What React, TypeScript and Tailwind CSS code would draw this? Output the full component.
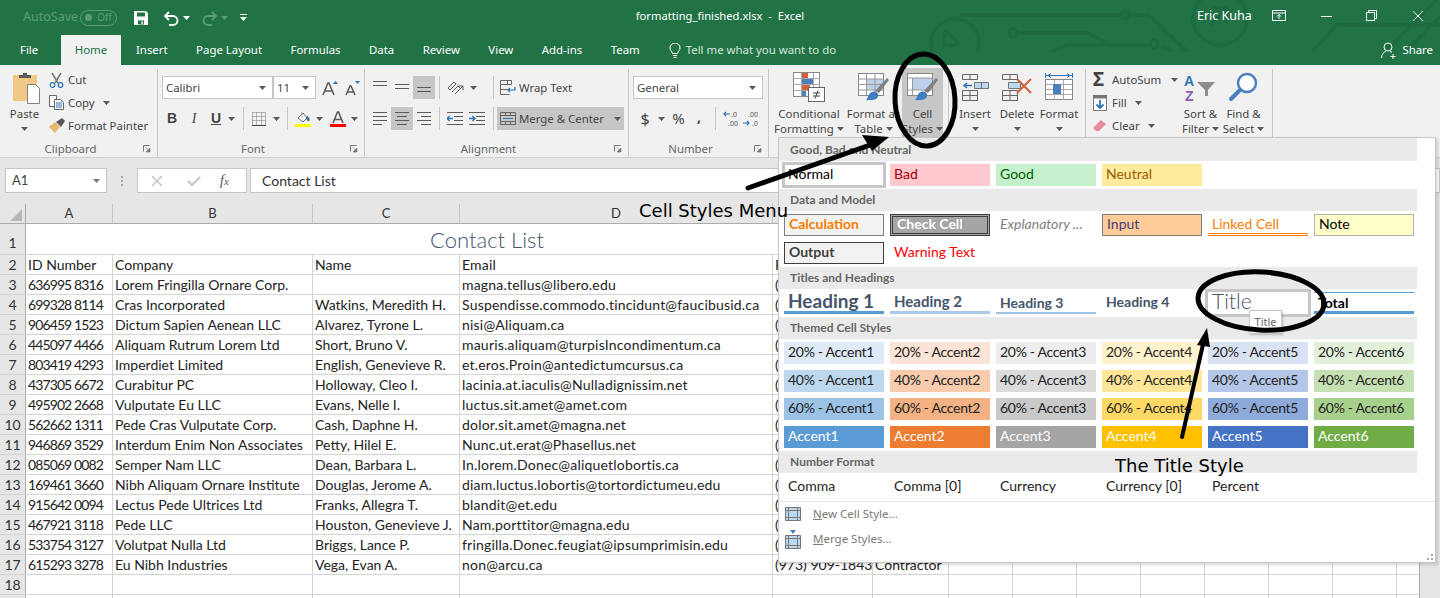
import React from "react";

const ui = "font-['Noto_Sans',sans-serif]";
const cal = "font-['Lato',sans-serif]";

const Caret = ({ c = "#595959", className = "" }: { c?: string; className?: string }) => (
  <svg width="7" height="4" viewBox="0 0 7 4" className={className}><path d="M0 0h7L3.500 4z" fill={c} /></svg>
);

const Launcher = () => (
  <svg width="16" height="10" viewBox="0 0 16 10" className="shrink-0">
    <path d="M2.500 7.500V1.500H8.500" fill="none" stroke="#777" />
    <path d="M5 3.500L8 6.500M9 4v4H5z" fill="#777" stroke="#777" strokeWidth="0.6" />
  </svg>
);

const Sep = ({ className = "" }: { className?: string }) => <div className={"w-px h-[23px] bg-[#c6c6c6] shrink-0 " + className} />;

function Lines({ rows }: { rows: [number, number][] }) {
  return (
    <svg width="16" height="16" viewBox="0 0 16 16">
      {rows.map(([x, w], i) => (
        <rect key={i} x={x} y={i * 4 + 1} width={w} height="1" fill="#595959" />
      ))}
    </svg>
  );
}

function TitleBar() {
  return (
    <div className="relative flex items-center h-[35px] text-white text-[12px] shrink-0">
      <div className="flex items-center pl-[23px] text-[#5b9a78] text-[12.500px]">
        <span className="w-[57px]">AutoSave</span>
        <div className="flex items-center justify-between w-[37px] h-[16px] rounded-full border border-[#5b9a78] px-[4px] text-[10px]">
          <span className="w-[7px] h-[7px] rounded-full bg-[#5b9a78]" />
          <span>Off</span>
        </div>
      </div>
      <svg width="16" height="16" viewBox="0 0 16 16" className="ml-[16px]">
        <path fillRule="evenodd" d="M1 1h12l2 2v12H1zM4 2.500v4h8v-4zM5 10.500v4h6v-4z" fill="#fff" />
        <rect x="8.500" y="11.500" width="1.500" height="2.500" fill="#fff" />
      </svg>
      <svg width="17" height="16" viewBox="0 0 17 16" className="ml-[14px]">
        <path d="M6 2L2 6l4 4M2 6h8a4.500 4.500 0 0 1 0 9H6" fill="none" stroke="#fff" strokeWidth="1.800" />
      </svg>
      <Caret c="#fff" className="ml-[3px]" />
      <svg width="17" height="16" viewBox="0 0 17 16" className="ml-[11px]">
        <path d="M11 2l4 4-4 4M15 6H7a4.500 4.500 0 0 0 0 9h4" fill="none" stroke="#5b9a78" strokeWidth="1.800" />
      </svg>
      <Caret c="#5b9a78" className="ml-[3px]" />
      <svg width="7" height="7" viewBox="0 0 7 7" className="ml-[12px]"><path d="M0 0h7v1H0zM0 3h7L3.500 7z" fill="#fff" /></svg>
      <div className="flex-1 flex justify-center pr-[4px] text-[11.200px] -translate-y-[1px]">
        <span>formatting_finished.xlsx&nbsp; -&nbsp; Excel</span>
      </div>
      <span className="text-[12.500px] w-[75px] -translate-y-[1px]">Eric Kuha</span>
      <svg width="14" height="12" viewBox="0 0 14 12" className="-translate-y-[2px]">
        <path d="M.5.500h13v10H.5zM.5 3h13M7 9V4.500M5 6.500l2-2 2 2" fill="none" stroke="#fff" />
      </svg>
      <svg width="12" height="12" viewBox="0 0 12 12" className="ml-[34px] -translate-y-[2px]"><path d="M1 6.500h11" stroke="#fff" /></svg>
      <svg width="11" height="11" viewBox="0 0 11 11" className="ml-[34px] -translate-y-[2px]">
        <path d="M.5 2.500h8v8h-8zM2.500 2.500v-2h8v8h-2" fill="none" stroke="#fff" />
      </svg>
      <svg width="12" height="12" viewBox="0 0 12 12" className="ml-[35px] mr-[16px] -translate-y-[2px]"><path d="M1 1l10 10M11 1L1 11" stroke="#fff" /></svg>
    </div>
  );
}

function Tabs() {
  const after = ["Insert", "Page Layout", "Formulas", "Data", "Review", "View", "Add-ins", "Team"];
  return (
    <div className="relative flex items-end h-[30px] text-white text-[11.400px] shrink-0">
      <span className="ml-[20px] w-[41px] h-[30px] leading-[30px]">File</span>
      <span className="w-[60px] h-[30px] leading-[30px] text-center bg-[#f1f1f1] text-[#217346]">Home</span>
      <div className="flex gap-[28.500px] ml-[15px]">
        {after.map((t) => <span key={t} className="h-[30px] leading-[30px]">{t}</span>)}
      </div>
      <svg width="12" height="15" viewBox="0 0 12 15" className="ml-[29px] mb-[7px]">
        <path d="M3.500 10.500C3 8 1 7.500 1 5a5 5 0 0 1 10 0c0 2.500-2 3-2.500 5.500zM4 12.500h4M4.500 14.500h3" fill="none" stroke="#fff" />
      </svg>
      <span className="ml-[5px] h-[30px] leading-[30px] text-[#d5e5dc]">Tell me what you want to do</span>
      <div className="ml-auto flex items-center h-[30px] pr-[7px]">
        <svg width="16" height="17" viewBox="0 0 16 17" className="mr-[5px]">
          <circle cx="7" cy="5" r="4" fill="none" stroke="#fff" />
          <path d="M.5 16c0-4 2.500-6 4.500-6.500M9 9.500c.8.200 1.500.500 2 1M12 12v5M9.500 14.500h5" fill="none" stroke="#fff" />
        </svg>
        <span>Share</span>
      </div>
    </div>
  );
}

function Circuit() {
  return (
    <svg width="1440" height="52" viewBox="0 0 1440 52" className="absolute left-0 top-0 pointer-events-none">
      <g fill="none" stroke="#1e6b41" strokeWidth="3.500">
        <circle cx="955" cy="43" r="24" />
        <path d="M945 30l15 15M945 32v13h13" />
        <path d="M960 15h160M1131 15h17l40 37" />
        <circle cx="1125.500" cy="15" r="4" />
        <circle cx="1013" cy="33" r="4" />
        <path d="M1018 33h70l22 12M1050 52l18-7h83M1161 46l14 6" />
        <circle cx="1154" cy="44" r="4" />
        <circle cx="1220" cy="18" r="27" />
        <path d="M1212 8h15v15M1225 10l-15 15" />
        <path d="M1312 52l25-27h103M1385 52l52-52M1405 52l35-35" />
      </g>
    </svg>
  );
}

function Group({ w, label, children, sep = true }: { w: string; label?: string; children: React.ReactNode; sep?: boolean }) {
  return (
    <div className={"flex flex-col h-[88px] mt-[4px] " + w + (sep ? " border-r border-[#c6c6c6]" : "")}>
      <div className="h-[71px] shrink-0">{children}</div>
      {label && (
        <div className="flex items-center h-[17px] text-[#666] text-[11.400px]">
          <span className="flex-1 text-center">{label}</span>
          <Launcher />
        </div>
      )}
    </div>
  );
}

const SmallRow = ({ icon, text, caret }: { icon: React.ReactNode; text: string; caret?: boolean }) => (
  <div className="flex items-center h-[23px]">
    <span className="w-[18px] h-[16px] flex items-center shrink-0">{icon}</span>
    <span className="ml-[1px]">{text}</span>
    {caret && <Caret className="ml-[8px]" />}
  </div>
);

function Clipboard() {
  return (
    <Group w="w-[158px]" label="Clipboard">
      <div className="flex text-[#444] text-[11.400px]">
        <div className="w-[49px] flex flex-col items-center">
          <svg width="30" height="33" viewBox="0 0 30 33" className="mt-[3px] ml-[3px]">
            <rect x="2" y="3" width="24" height="26" fill="#f0c987" />
            <path d="M8 6V3h4V1h4v2h4v3z" fill="#595959" />
            <path d="M16.500 12.500h8l4 4v15h-12z" fill="#fff" stroke="#7f7f7f" />
          </svg>
          <span className="mt-[1px] leading-[16px]">Paste</span>
          <Caret className="mt-[5px]" />
        </div>
        <div className="-mt-[1px]">
          <SmallRow text="Cut" icon={
            <svg width="15" height="16" viewBox="0 0 15 16">
              <path d="M3 1l6 10M12 1L6 11" stroke="#777" strokeWidth="1.500" fill="none" />
              <circle cx="3.500" cy="13" r="2.300" fill="none" stroke="#2e75b6" strokeWidth="1.200" />
              <circle cx="11.500" cy="13" r="2.300" fill="none" stroke="#2e75b6" strokeWidth="1.200" />
            </svg>} />
          <SmallRow text="Copy" caret icon={
            <svg width="15" height="15" viewBox="0 0 15 15">
              <path d="M.5.500h7v11h-7z" fill="#fff" stroke="#666" />
              <path d="M5.500 4.500h6l3 3v7h-9z" fill="#fff" stroke="#666" />
              <path d="M7 8h6M7 10h6M7 12h6" stroke="#2e75b6" />
            </svg>} />
          <SmallRow text="Format Painter" icon={
            <svg width="16" height="15" viewBox="0 0 16 15">
              <path d="M0 9l6-5 5 5-5 6z" fill="#e9b96e" />
              <path d="M7 4l6-4 3 3-4 6z" fill="#595959" />
            </svg>} />
        </div>
      </div>
    </Group>
  );
}

const Sel = ({ w, text, cls = "" }: { w: string; text: string; cls?: string }) => (
  <div className={"flex items-center justify-between bg-white border border-[#c6c6c6] h-[23px] pl-[3px] pr-[6px] text-[11.400px] text-[#444] shrink-0 " + w + " " + cls}>
    <span>{text}</span>
    <Caret />
  </div>
);

function Font() {
  return (
    <Group w="w-[207px]" label="Font">
      <div className="pl-[4px] pt-[7px] text-[#444]">
        <div className="flex items-center">
          <Sel w="w-[111px]" text="Calibri" />
          <Sel w="w-[43px]" text="11" />
          <svg width="18" height="16" viewBox="0 0 18 16" className="ml-[6px]">
            <path d="M1 15L6 3h1l5 12M3 11h7" fill="none" stroke="#595959" strokeWidth="1.500" />
            <path d="M11 4l2.500-3L16 4z" fill="#2e75b6" />
          </svg>
          <svg width="16" height="16" viewBox="0 0 16 16" className="ml-[5px]">
            <path d="M1 15l4-9h1l4 9M3 12h5" fill="none" stroke="#595959" strokeWidth="1.500" />
            <path d="M10 1h5l-2.500 3z" fill="#2e75b6" />
          </svg>
        </div>
        <div className="flex items-center mt-[8px] h-[23px]">
          <span className="w-[22px] ml-[-1px] text-center font-bold text-[14px] font-['Liberation_Sans',sans-serif]">B</span>
          <span className="w-[22px] text-center italic text-[14px] font-['Liberation_Serif',serif]">I</span>
          <span className="w-[22px] text-center underline font-bold text-[14px] font-['Liberation_Sans',sans-serif]">U</span>
          <Caret className="ml-[1px]" />
          <Sep className="ml-[8px] mr-[8px]" />
          <svg width="14" height="14" viewBox="0 0 14 14">
            <path d="M.5.500h13v13M.5 4.500h13M.5 8.500h13M4.500.500v13M9.500.500v13M.5.500v13" fill="none" stroke="#777" strokeDasharray="1 1" />
            <path d="M0 13.500h14" stroke="#444" />
          </svg>
          <Caret className="ml-[7px]" />
          <Sep className="ml-[7px] mr-[7px]" />
          <div className="flex flex-col items-center w-[16px]">
            <svg width="16" height="13" viewBox="0 0 16 13">
              <path d="M3 7l5-5 4 5-4 4z" fill="#fff" stroke="#666" />
              <path d="M7 1v6M12 5c2 1 3 3 2 5-2 0-3-2-2-5z" fill="#2e75b6" stroke="#666" strokeWidth=".5" />
            </svg>
            <div className="w-[16px] h-[3px] bg-[#ffff00]" />
          </div>
          <Caret className="ml-[5px]" />
          <div className="flex flex-col items-center w-[16px] ml-[7px]">
            <svg width="14" height="13" viewBox="0 0 14 13"><path d="M2 12L6.500 1h1L12 12M4 8.500h6" fill="none" stroke="#595959" strokeWidth="1.600" /></svg>
            <div className="w-[16px] h-[3px] bg-[#ff0000]" />
          </div>
          <Caret className="ml-[5px]" />
        </div>
      </div>
    </Group>
  );
}

const IconBtn = ({ on, children }: { on?: boolean; children: React.ReactNode }) => (
  <div className={"flex items-center justify-center w-[22px] h-[23px] shrink-0 " + (on ? "bg-[#c6c6c6]" : "")}>{children}</div>
);

function IndentIcon({ flip }: { flip?: boolean }) {
  return (
    <svg width="16" height="13" viewBox="0 0 16 13">
      <path d="M0 .5h16M7 4.500h9M7 8.500h9M0 12.500h16" stroke="#595959" />
      <path d={flip ? "M0 6.500h6M3.500 4l2.500 2.500L3.500 9" : "M6 6.500H0M2.500 4L0 6.500 2.500 9"} fill="none" stroke="#2e75b6" strokeWidth="1.500" />
    </svg>
  );
}

function Alignment() {
  return (
    <Group w="w-[264px]" label="Alignment">
      <div className="pl-[4px] pt-[7px] text-[#444] text-[11.400px]">
        <div className="flex items-center">
          <IconBtn><Lines rows={[[1, 14], [1, 14], [0, 0]]} /></IconBtn>
          <IconBtn><div className="translate-y-[3px]"><Lines rows={[[1, 14], [1, 14], [0, 0]]} /></div></IconBtn>
          <IconBtn on><div className="translate-y-[6px]"><Lines rows={[[1, 14], [1, 14], [0, 0]]} /></div></IconBtn>
          <Sep className="ml-[4px] mr-[7px]" />
          <svg width="18" height="16" viewBox="0 0 18 16">
            <path d="M1 8l6-6 2 2-6 6zM5 12l6-6 2 2" fill="none" stroke="#595959" />
            <path d="M8 14l8-8M16 6v4M16 6h-4" fill="none" stroke="#595959" />
          </svg>
          <Caret className="ml-[5px]" />
          <Sep className="ml-[16px] mr-[6px]" />
          <svg width="16" height="15" viewBox="0 0 16 15">
            <path d="M.5.500h11v4H.5zM.5 4.500v10h9M.5 9.500h9M7.500.500v4" fill="none" stroke="#666" />
            <path d="M15 7v3H8M10 8l-2 2 2 2" fill="none" stroke="#2e75b6" strokeWidth="1.200" />
          </svg>
          <span className="ml-[3px]">Wrap Text</span>
        </div>
        <div className="flex items-center mt-[8px]">
          <IconBtn><Lines rows={[[1, 14], [1, 14], [1, 14], [1, 9]]} /></IconBtn>
          <IconBtn on><Lines rows={[[1, 14], [3, 10], [1, 14], [3, 10]]} /></IconBtn>
          <IconBtn><Lines rows={[[1, 14], [5, 10], [1, 14], [5, 10]]} /></IconBtn>
          <Sep className="ml-[4px]" />
          <div className="w-[4px]" />
          <IconBtn><IndentIcon /></IconBtn>
          <IconBtn><IndentIcon flip /></IconBtn>
          <Sep className="ml-[5px] mr-[3px]" />
          <div className="flex items-center w-[127px] h-[23px] bg-[#c6c6c6] pl-[3px] shrink-0">
            <svg width="16" height="13" viewBox="0 0 16 13">
              <path d="M.5.500h15v12H.5zM.5 3.500h15M.5 9.500h15M5.500.5v3M10.500.5v3M5.500 9.500v3M10.500 9.500v3" fill="none" stroke="#666" />
              <path d="M3 6.500h10" stroke="#2e75b6" />
            </svg>
            <span className="ml-[3px]">Merge &amp; Center</span>
            <Caret className="ml-[10px]" />
          </div>
        </div>
      </div>
    </Group>
  );
}

const DecIcon = ({ a, b, left }: { a: string; b: string; left?: boolean }) => (
  <svg width="19" height="18" viewBox="0 0 19 18">
    <path d={left ? "M7 4H1M3 2L1 4l2 2" : "M0 13h6M4 11l2 2-2 2"} fill="none" stroke="#2e75b6" strokeWidth="1.200" />
    <text x={left ? 8 : 5} y="7" fontSize="7" fill="#595959" fontFamily="Noto Sans">{a}</text>
    <text x={left ? 5 : 9} y="16" fontSize="7" fill="#595959" fontFamily="Noto Sans">{b}</text>
  </svg>
);

function NumberGroup() {
  return (
    <Group w="w-[140px]" label="Number">
      <div className="pl-[4px] pt-[7px] text-[#444]">
        <Sel w="w-[130px]" text="General" />
        <div className="flex items-center mt-[8px] h-[23px]">
          <span className="ml-[5px] text-[16px] w-[14px] text-center">$</span>
          <Caret className="ml-[6px]" />
          <span className="ml-[6px] text-[15px] w-[15px] text-center">%</span>
          <span className="ml-[8px] text-[14px] font-bold w-[10px] text-center -translate-y-[2px]">,</span>
          <Sep className="ml-[11px] mr-[7px]" />
          <DecIcon a=".0" b=".00" left />
          <div className="w-[1px]" />
          <DecIcon a=".00" b=".0" />
        </div>
      </div>
    </Group>
  );
}

function Tall({ w, icon, lines, caret = true, on, blank }: { w: string; icon: React.ReactNode; lines: string[]; caret?: boolean; on?: boolean; blank?: boolean }) {
  return (
    <div className={"flex flex-col items-center h-[69px] text-[11.400px] text-[#444] leading-[15px] shrink-0 " + w + (on ? " bg-[#c6c6c6]" : "")}>
      <div className="h-[38px] flex items-center justify-center shrink-0">{icon}</div>
      <span className="whitespace-nowrap">{lines[0]}</span>
      <div className="flex items-center whitespace-nowrap h-[15px]">
        {lines[1] && <span>{lines[1]}</span>}
        {caret && <Caret className={blank ? "" : "ml-[3px]"} />}
      </div>
    </div>
  );
}

const Brush = () => (
  <g>
    <path d="M8 27c2-1 2-7 6-8 3-1 5 0 6 2 1 3-2 6-6 6-2 0-4 .5-6 0z" fill="#3f7fbf" />
    <path d="M17 18L29 5l2 2-10 13z" fill="#7f7f7f" />
  </g>
);

function Styles() {
  return (
    <Group w="w-[180px]">
      <div className="flex pl-[4px] -mt-[1px]">
        <Tall w="w-[72px]" lines={["Conditional", "Formatting"]} icon={
          <svg width="32" height="30" viewBox="0 0 32 30">
            <rect x=".5" y=".5" width="26" height="24" fill="#fff" stroke="#888" />
            <rect x="9" y="1" width="6" height="5" fill="#d2603a" />
            <rect x="9" y="7" width="12" height="5" fill="#4a80bd" />
            <rect x="9" y="13" width="8" height="5" fill="#d2603a" />
            <rect x="9" y="19" width="4" height="5" fill="#4a80bd" />
            <path d="M8.500 1v24M20.500 1v24M1 6.500h26M1 12.500h26M1 18.500h26" stroke="#aaa" />
            <rect x="15.500" y="15.500" width="16" height="14" fill="#fff" stroke="#666" />
            <path d="M20 21h7M20 24h7M25 18.500l-3 8" stroke="#444" fill="none" />
          </svg>} />
        <Tall w="w-[57px]" lines={["Format as", "Table"]} icon={
          <svg width="32" height="28" viewBox="0 0 32 28">
            <rect x=".5" y=".5" width="25" height="22" fill="#fff" stroke="#888" />
            <rect x="8" y="6" width="17" height="11" fill="#bdd2ea" />
            <path d="M.5 6h25M.5 11.500h25M.5 17h25M8.500 .5v22M17 .5v22" stroke="#999" />
            <Brush />
          </svg>} />
        <Tall w="w-[41px]" on lines={["Cell", "Styles"]} icon={
          <svg width="32" height="28" viewBox="0 0 32 28">
            <rect x=".5" y=".5" width="25" height="22" fill="#fff" stroke="#888" />
            <rect x="6" y="5" width="19" height="12" fill="#bdd2ea" />
            <path d="M.5 5h25M.5 17h25M5.500 5v18" stroke="#999" />
            <Brush />
          </svg>} />
      </div>
    </Group>
  );
}

function Cells() {
  const grid2 = <path d="M.5 16.500h15v10H.5zM.5 21.500h15M8 16.500v10M.5.500h15v5H.5zM8 .5v5" fill="none" stroke="#666" />;
  return (
    <Group w="w-[137px]">
      <div className="flex pl-[5px] -mt-[1px]">
        <Tall w="w-[42px]" blank lines={["Insert", ""]} icon={
          <svg width="27" height="27" viewBox="0 0 27 27">
            {grid2}
            <path d="M12.500 8.500h14v6h-14zM19.500 8.500v6" fill="#bdd7ee" stroke="#777" />
            <path d="M10 11.500H2M5 9l-3 2.500L5 14" fill="none" stroke="#2e75b6" strokeWidth="1.500" />
          </svg>} />
        <Tall w="w-[42px]" blank lines={["Delete", ""]} icon={
          <svg width="30" height="27" viewBox="0 0 30 27">
            {grid2}
            <path d="M6.500 8.500h12v6h-12z" fill="#bdd7ee" stroke="#777" />
            <path d="M15 5l14 14M29 5L15 19" stroke="#d2603a" strokeWidth="2" />
          </svg>} />
        <Tall w="w-[42px]" blank lines={["Format", ""]} icon={
          <svg width="28" height="29" viewBox="0 0 28 29">
            <path d="M.5 2.500h27M.5 0v5M27.500 0v5M6 .5L3 2.500l3 2M22 .5l3 2-3 2" fill="none" stroke="#2e75b6" />
            <rect x=".5" y="6.500" width="27" height="20" fill="#fff" stroke="#888" />
            <path d="M9.500 7v20M18.500 7v20M1 11.500h26M1 16.500h26M1 21.500h26" stroke="#aaa" />
            <rect x="8" y="11" width="8" height="10" fill="#4a80bd" />
          </svg>} />
      </div>
    </Group>
  );
}

function Editing() {
  return (
    <Group w="w-[187px]">
      <div className="flex pl-[7px] text-[11.400px] text-[#444]">
        <div className="w-[86px] -mt-[1px] shrink-0">
          <div className="flex items-center h-[23px]">
            <span className="w-[19px] text-[#444] text-[19px] font-bold leading-none">Σ</span>
            <span>AutoSum</span>
            <Caret className="ml-[10px]" />
          </div>
          <SmallRow text="Fill" caret icon={
            <svg width="15" height="16" viewBox="0 0 15 16">
              <rect x=".5" y=".5" width="13" height="15" fill="#fff" stroke="#777" />
              <rect x=".5" y=".5" width="13" height="3" fill="#777" />
              <path d="M7 5v8M3.500 9.500L7 13l3.500-3.500" fill="none" stroke="#2e75b6" strokeWidth="1.800" />
            </svg>} />
          <SmallRow text="Clear" caret icon={
            <svg width="14" height="13" viewBox="0 0 14 13"><path d="M0 9l8-8 5 4-7 7H3z" fill="#e98b9a" /></svg>} />
        </div>
        <div className="-mt-[1px] flex">
          <Tall w="w-[43px]" lines={["Sort &", "Filter"]} icon={
            <svg width="34" height="29" viewBox="0 0 34 29">
              <text x="0" y="13" fontSize="14" fontWeight="bold" fill="#2e75b6" fontFamily="Liberation Sans">A</text>
              <text x="1" y="28" fontSize="14" fontWeight="bold" fill="#8e5ab5" fontFamily="Liberation Sans">Z</text>
              <path d="M13 9h18l-7 8v6h-3v-6z" fill="#8c8c8c" />
            </svg>} />
          <Tall w="w-[43px]" lines={["Find &", "Select"]} icon={
            <svg width="30" height="30" viewBox="0 0 30 30">
              <circle cx="18" cy="11" r="9" fill="#fff" stroke="#4a80bd" strokeWidth="2.500" />
              <path d="M11 18L2 27" stroke="#4a80bd" strokeWidth="4" strokeLinecap="round" />
            </svg>} />
        </div>
      </div>
    </Group>
  );
}

function Ribbon() {
  return (
    <div className={"flex h-[93px] bg-[#f1f1f1] border-b border-[#d0d0d0] shrink-0 " + ui}>
      <Clipboard />
      <Font />
      <Alignment />
      <NumberGroup />
      <Styles />
      <Cells />
      <Editing />
    </div>
  );
}

function FormulaBar() {
  return (
    <div className={"flex items-start h-[46px] bg-[#e6e6e6] pt-[10px] pl-[5px] shrink-0 text-[13px] text-[#444] " + cal}>
      <div className="flex items-center justify-between w-[102px] h-[25px] bg-white border border-[#c6c6c6] pl-[6px] pr-[6px]">
        <span>A1</span>
        <Caret c="#777" />
      </div>
      <div className="w-[30px] h-[25px] flex flex-col items-center justify-center gap-[2px]">
        <span className="w-[2px] h-[2px] bg-[#aaa]" /><span className="w-[2px] h-[2px] bg-[#aaa]" /><span className="w-[2px] h-[2px] bg-[#aaa]" />
      </div>
      <div className="flex items-center w-[110px] h-[25px] bg-white border border-[#c6c6c6] pl-[13px]">
        <svg width="12" height="12" viewBox="0 0 12 12"><path d="M1 1l10 10M11 1L1 11" stroke="#c6c6c6" strokeWidth="1.500" /></svg>
        <svg width="14" height="12" viewBox="0 0 14 12" className="ml-[24px]"><path d="M1 6l4 4 8-8" fill="none" stroke="#c6c6c6" strokeWidth="2" /></svg>
        <span className="ml-[19px] italic font-['Liberation_Serif',serif] text-[14px] text-[#555]">f<span className="text-[11px]">x</span></span>
      </div>
      <div className="flex-1 h-[25px] bg-white border border-[#c6c6c6] ml-[3px] pl-[11px] flex items-center text-[14px] text-[#333]">Contact List</div>
    </div>
  );
}

const rows: string[][] = [
  ["ID Number", "Company", "Name", "Email", "P"],
  ["636995 8316", "Lorem Fringilla Ornare Corp.", "", "magna.tellus@libero.edu", "("],
  ["699328 8114", "Cras Incorporated", "Watkins, Meredith H.", "Suspendisse.commodo.tincidunt@faucibusid.ca", "("],
  ["906459 1523", "Dictum Sapien Aenean LLC", "Alvarez, Tyrone L.", "nisi@Aliquam.ca", "("],
  ["445097 4466", "Aliquam Rutrum Lorem Ltd", "Short, Bruno V.", "mauris.aliquam@turpisIncondimentum.ca", "("],
  ["803419 4293", "Imperdiet Limited", "English, Genevieve R.", "et.eros.Proin@antedictumcursus.ca", "("],
  ["437305 6672", "Curabitur PC", "Holloway, Cleo I.", "lacinia.at.iaculis@Nulladignissim.net", "("],
  ["495902 2668", "Vulputate Eu LLC", "Evans, Nelle I.", "luctus.sit.amet@amet.com", "("],
  ["562662 1311", "Pede Cras Vulputate Corp.", "Cash, Daphne H.", "dolor.sit.amet@magna.net", "("],
  ["946869 3529", "Interdum Enim Non Associates", "Petty, Hilel E.", "Nunc.ut.erat@Phasellus.net", "("],
  ["085069 0082", "Semper Nam LLC", "Dean, Barbara L.", "In.lorem.Donec@aliquetlobortis.ca", "("],
  ["169461 3660", "Nibh Aliquam Ornare Institute", "Douglas, Jerome A.", "diam.luctus.lobortis@tortordictumeu.edu", "("],
  ["915642 0094", "Lectus Pede Ultrices Ltd", "Franks, Allegra T.", "blandit@et.edu", "("],
  ["467921 3118", "Pede LLC", "Houston, Genevieve J.", "Nam.porttitor@magna.edu", "("],
  ["533754 3127", "Volutpat Nulla Ltd", "Briggs, Lance P.", "fringilla.Donec.feugiat@ipsumprimisin.edu", "("],
  ["615293 3278", "Eu Nibh Industries", "Vega, Evan A.", "non@arcu.ca", "(973) 909-1843", "Contractor"],
  [],
  [],
];

const colW = ["w-[87px]", "w-[200px]", "w-[147px]", "w-[313px]", "w-[100px]", "w-[76px]", "w-[64px]", "w-[64px]", "w-[64px]", "w-[64px]", "w-[64px]", "w-[64px]", "w-[64px]"];
const heads = ["A", "B", "C", "D", "E", "F", "G", "H", "I", "J", "K", "L", "M"];

function Sheet() {
  return (
    <div className={"flex flex-1 min-h-0 " + cal}>
      <div className="w-[1419px] shrink-0 bg-white text-[14px] text-[#222]">
        <div className="flex h-[20px] bg-[#e6e6e6] border-b border-[#ababab] text-[#333] text-[13px]">
          <div className="relative w-[26px] h-[19px] border-r border-[#ababab] shrink-0">
            <svg width="12" height="12" viewBox="0 0 12 12" className="absolute right-[3px] bottom-[2px]"><path d="M12 0v12H0z" fill="#b8b8b8" /></svg>
          </div>
          {heads.map((h, i) => (
            <div key={h} className={"text-center leading-[19px] border-r border-[#c6c6c6] shrink-0 " + colW[i]}>{i < 5 ? h : ""}</div>
          ))}
        </div>
        <div className="flex h-[31px] border-b border-[#d4d4d4]">
          <div className="w-[26px] bg-[#e6e6e6] border-r border-[#ababab] shrink-0 text-center text-[#333] pt-[9px] leading-[20px]">1</div>
          <div className="w-[923px] text-center text-[#44546a] text-[22px] font-light leading-[32px] border-r border-[#d4d4d4] shrink-0">Contact List</div>
        </div>
        {rows.map((r, i) => (
          <div key={i} className="flex h-[20px] border-b border-[#d4d4d4]">
            <div className="w-[26px] bg-[#e6e6e6] border-r border-[#ababab] shrink-0 text-center text-[#333] leading-[19px]">{i + 2}</div>
            {colW.map((w, j) => {
              const tone = j === 0 && i > 0 ? "tracking-[-0.9px]" : j === 3 ? "tracking-[0.2px]" : "";
              return (
                <div key={j} className={"pl-[2px] leading-[19px] whitespace-nowrap border-r border-[#d4d4d4] shrink-0 overflow-hidden " + w + " " + tone}>{r[j] ?? ""}</div>
              );
            })}
          </div>
        ))}
      </div>
      <div className="flex-1 bg-[#e6e6e6] border-l border-[#ababab]" />
    </div>
  );
}

const Head = ({ t, first }: { t: string; first?: boolean }) => (
  <div className={"mr-[18px] bg-[#eaeaea] pl-[11px] text-[#666] font-bold text-[12px] flex items-center " + (first ? "h-[23px]" : "h-[22px]")}>{t}</div>
);

type C = { t: string; c?: string };
const Cell = ({ t, c = "" }: C) => (
  <div className={"h-[22px] pl-[4px] flex items-center text-[14px] whitespace-nowrap overflow-hidden " + (c.includes("border-b") ? "" : "pb-[4px] ") + c}>{t}</div>
);

const GRow = ({ items }: { items: C[] }) => (
  <div className="grid grid-cols-[repeat(6,100px)] gap-x-[6px] gap-y-[6px] pl-[5px] py-[3px]">
    {items.map((it, i) => <Cell key={i} {...it} />)}
  </div>
);

const num = "tracking-[-0.3px] text-[#222] ";
const themed: C[] = [
  { t: "20% - Accent1", c: num + "bg-[#deeaf6]" },
  { t: "20% - Accent2", c: num + "bg-[#fbe4d5]" },
  { t: "20% - Accent3", c: num + "bg-[#ededed]" },
  { t: "20% - Accent4", c: num + "bg-[#fff2cc]" },
  { t: "20% - Accent5", c: num + "bg-[#d9e2f3]" },
  { t: "20% - Accent6", c: num + "bg-[#e2efd9]" },
  { t: "40% - Accent1", c: num + "bg-[#bdd7ee]" },
  { t: "40% - Accent2", c: num + "bg-[#f8cbad]" },
  { t: "40% - Accent3", c: num + "bg-[#dbdbdb]" },
  { t: "40% - Accent4", c: num + "bg-[#ffe699]" },
  { t: "40% - Accent5", c: num + "bg-[#b4c6e7]" },
  { t: "40% - Accent6", c: num + "bg-[#c5e0b3]" },
  { t: "60% - Accent1", c: num + "bg-[#9cc2e5]" },
  { t: "60% - Accent2", c: num + "bg-[#f4b183]" },
  { t: "60% - Accent3", c: num + "bg-[#c9c9c9]" },
  { t: "60% - Accent4", c: num + "bg-[#ffd966]" },
  { t: "60% - Accent5", c: num + "bg-[#8eaadb]" },
  { t: "60% - Accent6", c: num + "bg-[#a8d08d]" },
  { t: "Accent1", c: "bg-[#5b9bd5] text-white" },
  { t: "Accent2", c: "bg-[#ed7d31] text-white" },
  { t: "Accent3", c: "bg-[#a5a5a5] text-white" },
  { t: "Accent4", c: "bg-[#ffc000] text-white" },
  { t: "Accent5", c: "bg-[#4472c4] text-white" },
  { t: "Accent6", c: "bg-[#70ad47] text-white" },
];

function Gallery() {
  return (
    <div className={"absolute left-[778px] top-[137px] w-[658px] h-[426px] bg-white border border-[#c6c6c6] shadow-[2px_2px_3px_rgba(0,0,0,0.15)] " + cal}>
      <Head first t="Good, Bad and Neutral" />
      <GRow items={[
        { t: "Normal", c: "bg-white text-black outline-[3px] outline-solid outline-[#c6c6c6] outline-offset-[-1px]" },
        { t: "Bad", c: "bg-[#ffc7ce] text-[#9c0006]" },
        { t: "Good", c: "bg-[#c6efce] text-[#006100]" },
        { t: "Neutral", c: "bg-[#ffeb9c] text-[#9c5700]" },
      ]} />
      <Head t="Data and Model" />
      <GRow items={[
        { t: "Calculation", c: "bg-[#f2f2f2] border border-[#7f7f7f] text-[#fa7d00] font-bold pl-[3px]" },
        { t: "Check Cell", c: "bg-[#a5a5a5] border-[3px] border-double border-[#3f3f3f] text-white font-bold pl-[2px]" },
        { t: "Explanatory ...", c: "italic text-[#7f7f7f]" },
        { t: "Input", c: "bg-[#ffcc99] border border-[#7f7f7f] text-[#3f3f76] pl-[3px]" },
        { t: "Linked Cell", c: "text-[#fa7d00] border-b-[3px] border-double border-[#ff8001]" },
        { t: "Note", c: "bg-[#ffffcc] border border-[#b2b2b2] text-black pl-[3px]" },
        { t: "Output", c: "bg-[#f2f2f2] border border-[#3f3f3f] text-[#3f3f3f] font-bold pl-[3px]" },
        { t: "Warning Text", c: "text-[#ff0000]" },
      ]} />
      <Head t="Titles and Headings" />
      <GRow items={[
        { t: "Heading 1", c: "text-[#44546a] font-bold text-[19px] pl-[2px] border-b-[3px] border-[#5b9bd5]" },
        { t: "Heading 2", c: "text-[#44546a] font-bold text-[15px] border-b-[3px] border-[#a9c9e7]" },
        { t: "Heading 3", c: "text-[#44546a] font-bold text-[13px] border-b-[2px] border-[#9cc2e5]" },
        { t: "Heading 4", c: "text-[#44546a] font-bold text-[13px] border-b-[3px] border-transparent" },
        { t: "Title", c: "text-[#44546a] font-light text-[21px] bg-white outline-[3px] outline-solid outline-[#c6c6c6]" },
        { t: "Total", c: "text-black font-bold border-t border-b-[3px] border-b-double border-t-[#5b9bd5] border-b-[#5b9bd5]" },
      ]} />
      <Head t="Themed Cell Styles" />
      <GRow items={themed} />
      <Head t="Number Format" />
      <GRow items={[
        { t: "Comma", c: "text-[#222]" },
        { t: "Comma [0]", c: "text-[#222]" },
        { t: "Currency", c: "text-[#222]" },
        { t: "Currency [0]", c: "text-[#222]" },
        { t: "Percent", c: "text-[#222]" },
      ]} />
      <div className="h-px bg-[#e1e1e1]" />
      <div className={"flex flex-col gap-[5px] pl-[6px] text-[#7a7a7a] text-[11.500px] " + ui}>
        <div className="flex items-center h-[20px] mt-[2px]">
          <svg width="16" height="14" viewBox="0 0 16 14"><path d="M.5.500h15v13H.5z" fill="#bdd7ee" stroke="#777" /><path d="M.5 3.500h15M.5 10.500h15M3.500 0v14M12.500 0v14" stroke="#777" /></svg>
          <span className="ml-[12px]"><u>N</u>ew Cell Style...</span>
        </div>
        <div className="flex items-center h-[20px]">
          <svg width="16" height="19" viewBox="0 0 16 19"><path d="M5 0h6L8 4z" fill="#4a80bd" /><path d="M.5 5.500h15v13H.5z" fill="#bdd7ee" stroke="#777" /><path d="M.5 8.500h15M.5 15.500h15M3.500 5v14M12.500 5v14" stroke="#777" /></svg>
          <span className="ml-[12px]"><u>M</u>erge Styles...</span>
        </div>
      </div>
      <svg width="6" height="6" viewBox="0 0 6 6" className="absolute right-[2px] bottom-[2px]"><path d="M4 0h2v2H4zM0 4h2v2H0zM4 4h2v2H4z" fill="#aaa" /></svg>
      <div className={"absolute left-[470px] top-[172px] w-[33px] h-[24px] bg-white border border-[#c6c6c6] text-[#666] text-[11px] flex items-center justify-center shadow-[1px_1px_2px_rgba(0,0,0,0.2)] " + ui}>Title</div>
    </div>
  );
}

function Annotations() {
  return (
    <>
      <svg width="1440" height="598" viewBox="0 0 1440 598" className="absolute left-0 top-0 pointer-events-none">
        <ellipse cx="925" cy="100" rx="30" ry="46" fill="none" stroke="#000" strokeWidth="5" transform="rotate(-3 925 100)" />
        <ellipse cx="1261" cy="301" rx="63" ry="29" fill="none" stroke="#000" strokeWidth="5" transform="rotate(3 1261 301)" />
        <path d="M748 188L870 145" stroke="#000" strokeWidth="5" strokeLinecap="round" />
        <path d="M889 137L862 135L872 151z" fill="#000" />
        <path d="M1182 437L1204 340" stroke="#000" strokeWidth="4" strokeLinecap="round" />
        <path d="M1207 328L1197 345L1210 347z" fill="#000" />
      </svg>
      <span className="absolute left-[639px] top-[200px] text-[18px] leading-[22px] text-black whitespace-nowrap font-['DejaVu_Sans',sans-serif]">Cell Styles Menu</span>
      <span className="absolute left-[1115px] top-[455px] text-[18px] leading-[22px] text-black whitespace-nowrap font-['DejaVu_Sans',sans-serif]">The Title Style</span>
    </>
  );
}

export default function App() {
  return (
    <div className="relative w-[1440px] h-[598px] overflow-hidden flex flex-col bg-white">
      <div className={"relative bg-[#217346] shrink-0 " + ui}>
        <Circuit />
        <TitleBar />
        <Tabs />
      </div>
      <Ribbon />
      <FormulaBar />
      <Sheet />
      <Gallery />
      <Annotations />
    </div>
  );
}
